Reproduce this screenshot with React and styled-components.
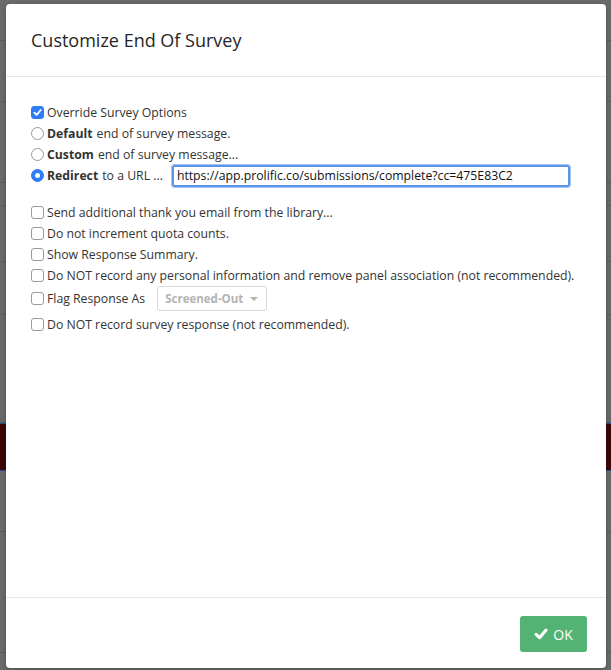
import React, { useState } from 'react'
import styled, { createGlobalStyle } from 'styled-components'

const GlobalStyle = createGlobalStyle`
  html, body {
    margin: 0;
    padding: 0;
    background: #6b6b6b;
    font-family: "Open Sans", "Liberation Sans", sans-serif;
  }
`

const Page = styled.div`
  position: relative;
  width: 611px;
  height: 670px;
  overflow: hidden;
  background: #6b6b6b;
`

const Backdrop = styled.div`
  display: flex;
  flex-direction: column;
  height: 100%;
`

const BackStripe = styled.div`
  height: ${p => p.h}px;
  flex-shrink: 0;
  border-bottom: 1px solid ${p => p.line || '#5d5d5d'};
  border-top: ${p => (p.line ? `1px solid ${p.line}` : '0')};
  background: ${p => p.bg || 'transparent'};
`

const Modal = styled.div`
  position: absolute;
  top: 4px;
  left: 6px;
  width: 600px;
  height: 664px;
  background: #fff;
  border-radius: 4px;
  display: flex;
  flex-direction: column;
  box-shadow: 0 2px 6px rgba(0, 0, 0, 0.25);
`

const Header = styled.div`
  height: 72px;
  padding: 0 25px;
  display: flex;
  align-items: center;
  border-bottom: 1px solid #e5e5e5;
`

const Title = styled.h2`
  margin: 0;
  font-size: 18px;
  font-weight: 400;
  color: #262626;
`

const Body = styled.div`
  flex: 1;
  padding: 25px 25px 24px;
  display: flex;
  flex-direction: column;
`

const Group = styled.div`
  display: flex;
  flex-direction: column;
  margin-bottom: ${p => p.gap || 0}px;
`

const Row = styled.label`
  display: flex;
  align-items: center;
  height: ${p => p.h || 21}px;
  font-size: 12.25px;
  color: #333;
  white-space: nowrap;
`

const Box = styled.span`
  width: 13px;
  height: 13px;
  box-sizing: border-box;
  border-radius: ${p => (p.round ? '50%' : '3px')};
  border: 1px solid ${p => (p.on ? '#2e7cf6' : '#9a9a9a')};
  background: ${p => (p.on ? '#2e7cf6' : '#fff')};
  margin-right: 3px;
  display: flex;
  align-items: center;
  justify-content: center;
  flex-shrink: 0;
`

const Dot = styled.span`
  width: 5px;
  height: 5px;
  border-radius: 50%;
  background: #fff;
`

const Strong = styled.b`
  font-weight: 700;
  margin-right: 4px;
`

const UrlInput = styled.input`
  margin-left: 9px;
  width: 398px;
  height: 22px;
  box-sizing: border-box;
  border: 2px solid #5b94e8;
  border-radius: 2px;
  padding: 0 3px;
  font-family: "Open Sans", "Liberation Sans", sans-serif;
  font-size: 12.25px;
  color: #111;
  outline: 1px solid #a9c6f2;
`

const Select = styled.div`
  margin-left: 12px;
  width: 110px;
  height: 25px;
  box-sizing: border-box;
  border: 1px solid #d9d9d9;
  border-radius: 3px;
  display: flex;
  align-items: center;
  padding: 0 8px 0 7px;
  font-size: 11.5px;
  font-weight: 700;
  color: #b3b3b3;
  justify-content: space-between;
`

const Caret = styled.span`
  width: 0;
  height: 0;
  border-left: 4px solid transparent;
  border-right: 4px solid transparent;
  border-top: 4px solid #b3b3b3;
`

const Footer = styled.div`
  height: 71px;
  box-sizing: border-box;
  border-top: 1px solid #e5e5e5;
  display: flex;
  align-items: flex-start;
  justify-content: flex-end;
  padding: 18px 19px 0;
`

const OkButton = styled.button`
  width: 67px;
  height: 36px;
  border: 0;
  border-radius: 3px;
  background: #52b374;
  color: #fff;
  font-family: "Open Sans", "Liberation Sans", sans-serif;
  font-size: 14px;
  display: flex;
  align-items: center;
  justify-content: center;
  gap: 5px;
`

const Check = ({ size = 9, color = '#fff', w = 2 }) => (
  <svg width={size} height={size} viewBox="0 0 10 10">
    <path d="M1.5 5.2 L4 7.6 L8.6 2.2" fill="none" stroke={color} strokeWidth={w} strokeLinecap="round" strokeLinejoin="round" />
  </svg>
)

const options = [
  'Send additional thank you email from the library...',
  'Do not increment quota counts.',
  'Show Response Summary.',
  'Do NOT record any personal information and remove panel association (not recommended).',
]

export default function App() {
  const [url, setUrl] = useState('https://app.prolific.co/submissions/complete?cc=475E83C2')

  return (
    <Page>
      <GlobalStyle />
      <Backdrop>
        <BackStripe h={40} />
        <BackStripe h={60} />
        <BackStripe h={80} />
        <BackStripe h={22} />
        <BackStripe h={55} />
        <BackStripe h={52} />
        <BackStripe h={107} />
        <BackStripe h={46} bg="#3c0708" line="#2c4f94" />
        <BackStripe h={60} />
        <BackStripe h={120} />
      </Backdrop>
      <Modal>
        <Header>
          <Title>Customize End Of Survey</Title>
        </Header>
        <Body>
          <Group gap={16}>
            <Row>
              <Box on><Check /></Box>
              Override Survey Options
            </Row>
            <Row>
              <Box round />
              <Strong>Default</Strong> end of survey message.
            </Row>
            <Row>
              <Box round />
              <Strong>Custom</Strong> end of survey message...
            </Row>
            <Row>
              <Box round on><Dot /></Box>
              <Strong>Redirect</Strong> to a URL ...
              <UrlInput value={url} onChange={e => setUrl(e.target.value)} />
            </Row>
          </Group>
          <Group>
            {options.map(t => (
              <Row key={t}>
                <Box />
                {t}
              </Row>
            ))}
            <Row h={25}>
              <Box />
              Flag Response As
              <Select>
                Screened-Out
                <Caret />
              </Select>
            </Row>
            <Row h={26}>
              <Box />
              Do NOT record survey response (not recommended).
            </Row>
          </Group>
        </Body>
        <Footer>
          <OkButton>
            <Check size={14} w={2.2} />
            OK
          </OkButton>
        </Footer>
      </Modal>
    </Page>
  )
}
